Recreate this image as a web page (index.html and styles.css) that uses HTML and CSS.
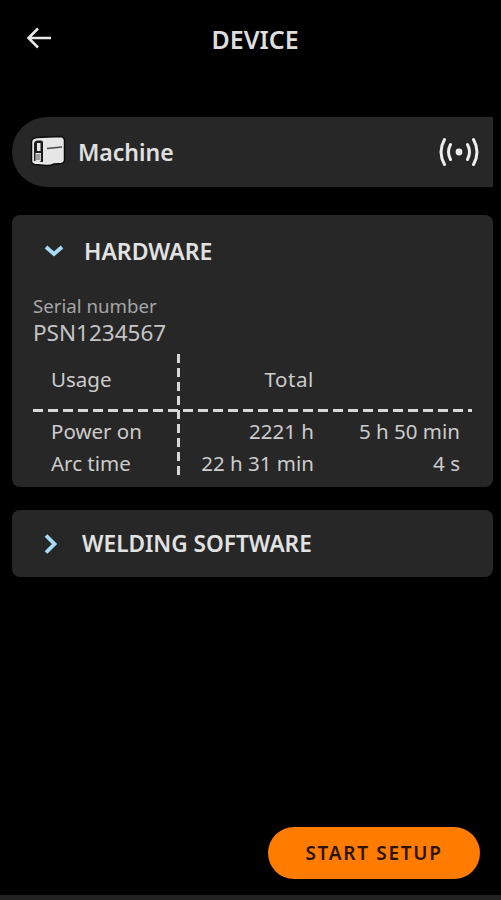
FILE: index.html
```html
<!DOCTYPE html>
<html lang="en">
<head>
<meta charset="utf-8">
<title>Device</title>
<link rel="stylesheet" href="styles.css">
</head>
<body>
<div class="page">
  <header class="top">
    <svg class="back" width="26" height="24" viewBox="0 0 26 24"><path d="M25 12H3M12 2.500L2.500 12l9.500 9.500" fill="none" stroke="#e8e8e8" stroke-width="2.600"/></svg>
    <h1 class="title">DEVICE</h1>
  </header>
  <section class="machine">
    <svg class="machine-icon" width="36" height="32" viewBox="0 0 36 32">
      <path d="M7 2.500L30 1.500Q34.500 1.500 34.500 6V25Q34.500 28 31 28.500L24 29Q20 31 16 30.500L5 29.500Q1.500 29 1.500 26V7Q1.500 3 7 2.500Z" fill="#e6e6e6" stroke="#0c0c0c" stroke-width="1.500"/>
      <path d="M7 5.500H11Q13 5.500 13 7.500V27H9Q11 27 11 25V18H5.500V26H4V9Q4 6 7 5.500Z" fill="#1c1c1c"/>
      <rect x="7" y="8" width="3.500" height="8" fill="#e6e6e6"/>
      <rect x="6" y="19" width="4.500" height="6" fill="#a0a0a0"/>
      <path d="M17 13.500L32 12" stroke="#4a4a4a" stroke-width="1.600"/>
    </svg>
    <span class="machine-name">Machine</span>
    <svg class="signal" width="42" height="30" viewBox="0 0 42 30" fill="none" stroke="#eee" stroke-width="3" stroke-linecap="round">
      <path d="M6.500 2.500Q-0.500 15 6.500 27.500M12.500 7.500Q8.500 15 12.500 22.500M35.500 2.500Q42.500 15 35.500 27.500M29.500 7.500Q33.500 15 29.500 22.500"/>
      <circle cx="21" cy="15" r="3.400" fill="#eee" stroke="none"/>
    </svg>
  </section>
  <section class="card hardware">
    <div class="card-head head-open">
      <svg class="chev-down" width="20" height="14" viewBox="0 0 20 14"><path d="M2 3l8 7 8-7" fill="none" stroke="#a6dcf7" stroke-width="3.800"/></svg>
      <h2 class="card-title">HARDWARE</h2>
    </div>
    <div class="serial-label">Serial number</div>
    <div class="serial-value">PSN1234567</div>
    <div class="usage">
      <div class="cell label head-cell">Usage</div>
      <div class="cell num head-cell">Total</div>
      <div class="cell num head-cell"></div>
      <div class="cell label">Power on</div>
      <div class="cell num">2221 h</div>
      <div class="cell num">5 h 50 min</div>
      <div class="cell label">Arc time</div>
      <div class="cell num">22 h 31 min</div>
      <div class="cell num">4 s</div>
    </div>
  </section>
  <section class="card software">
    <svg class="chev-right" width="14" height="22" viewBox="0 0 14 22"><path d="M2 2.500l8.500 8.500-8.500 8.500" fill="none" stroke="#a6dcf7" stroke-width="3.800"/></svg>
    <h2 class="card-title card-title-long">WELDING SOFTWARE</h2>
  </section>
  <div class="actions"><button class="start" type="button">START SETUP</button></div>
  <div class="bottom-edge"></div>
</div>
</body>
</html>
```
FILE: styles.css
```css
* { box-sizing: border-box; }
html, body { margin: 0; padding: 0; background: #000; }
body { font-family: "Noto Sans", "Open Sans", sans-serif; color: #d4d4d4; }
.page { width: 501px; height: 900px; display: flex; flex-direction: column; overflow: hidden; }

.top { height: 117px; flex: none; position: relative; }
.back { position: absolute; left: 26px; top: 26px; }
.title { margin: 0; padding-top: 22px; padding-left: 9px; text-align: center; font-size: 25px; line-height: 34px; font-weight: 600; color: #dedede; }

.machine { flex: none; height: 70px; margin: 0 8px 0 12px; background: #272727; border-radius: 35px 0 0 35px; display: flex; align-items: center; padding: 0 13px 0 18px; }
.machine-icon { flex: none; margin-top: -3px; }
.machine-name { margin-left: 12px; font-size: 23px; font-weight: 600; color: #e0e0e0; }
.signal { margin-left: auto; flex: none; }

.card { flex: none; margin: 0 8px 0 12px; background: #272727; border-radius: 8px; }
.hardware { margin-top: 28px; height: 272px; padding: 0 21px; }
.card-head { display: flex; align-items: center; }
.head-open { height: 71px; padding-left: 11px; }
.chev-down { flex: none; margin-right: 20px; }
.card-title { margin: 0; font-size: 23px; line-height: 32px; font-weight: 600; color: #e2e2e2; }
.card-title-long { font-size: 22.600px; }
.serial-label { margin-top: 7px; font-size: 18.700px; line-height: 25px; color: #a6a6a6; }
.serial-value { font-size: 22.500px; line-height: 30px; color: #c4c4c4; }

.usage { position: relative; display: grid; grid-template-columns: 145px 136px 146px; grid-template-rows: 56px 42px 22px; width: 439px; margin-top: 6px; font-size: 20.500px; }
.usage::before { content: ""; position: absolute; left: 144px; top: 0; width: 3px; height: 122px; background: repeating-linear-gradient(to bottom, #d8d8d8 0 9px, transparent 9px 14px); }
.usage::after { content: ""; position: absolute; left: 0; right: 0; top: 55px; height: 3px; background: repeating-linear-gradient(to right, #d8d8d8 0 10px, transparent 10px 15px); }
.cell { display: flex; align-items: center; color: #cccccc; white-space: nowrap; }
.label { padding-left: 18px; }
.num { justify-content: flex-end; }
.head-cell { padding-bottom: 6px; }
.head-cell.num { letter-spacing: 0.600px; }

.software { margin-top: 23px; height: 67px; display: flex; align-items: center; padding-left: 32px; }
.chev-right { flex: none; margin-right: 24px; }

.actions { margin-top: auto; display: flex; justify-content: flex-end; padding-right: 21px; }
.start { width: 212px; height: 52px; border: 0; border-radius: 26px; background: #ff7c00; color: #2a1400; font-family: inherit; font-size: 19px; font-weight: 600; letter-spacing: 1.700px; }
.bottom-edge { flex: none; height: 5px; margin-top: 16px; background: #222; }
```
